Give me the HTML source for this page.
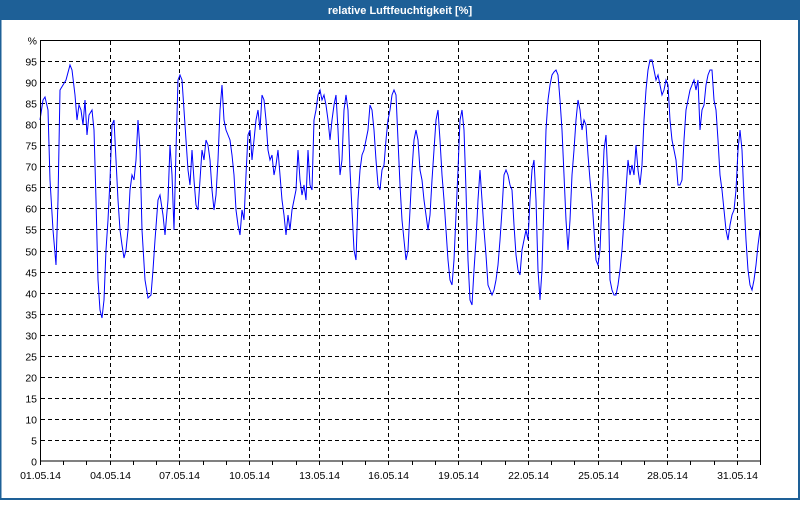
<!DOCTYPE html>
<html><head><meta charset="utf-8"><style>
html,body{margin:0;padding:0;background:#fff;}
body{width:800px;height:500px;overflow:hidden;}
svg text{font-family:"Liberation Sans",sans-serif;font-size:10.5px;fill:#000;}
</style></head><body>
<svg width="800" height="500" viewBox="0 0 800 500" xmlns="http://www.w3.org/2000/svg">
<rect x="0" y="0" width="800" height="500" fill="#fff"/>
<rect x="0" y="0" width="800" height="20" fill="#1e6097"/>
<rect x="0" y="20" width="1.5" height="480" fill="#1e6097"/>
<rect x="798" y="20" width="2" height="480" fill="#1e6097"/>
<rect x="0" y="498" width="800" height="2" fill="#1e6097"/>
<text x="400" y="14" text-anchor="middle" style="fill:#fff;font-weight:bold;font-size:11px">relative Luftfeuchtigkeit [%]</text>
<g stroke="#000" stroke-width="1" stroke-dasharray="4,3" fill="none" id="grid"></g>
<g id="labels"></g>
<polyline id="line" fill="none" stroke="#0000ff" stroke-width="1"/>
<rect x="40.5" y="40.5" width="720" height="420.5" fill="none" stroke="#000"/>
</svg>
<script>
var ns="http://www.w3.org/2000/svg",svg=document.querySelector('svg'),g=document.getElementById('grid'),lb=document.getElementById('labels');
function el(p,t,a,txt){var e=document.createElementNS(ns,t);for(var k in a)e.setAttribute(k,a[k]);if(txt)e.textContent=txt;p.appendChild(e);return e;}
var y0=461,sp=21.05,dx=23.23;
for(var i=0;i<=20;i++){var y=Math.round(y0-i*sp)+0.5;
 if(i>0&&i<20)el(g,'line',{x1:41,x2:760,y1:y,y2:y});
 el(lb,'text',{x:37,y:y+4,'text-anchor':'end'},i<20?String(i*5):'%');}
var d=['01.05.14','04.05.14','07.05.14','10.05.14','13.05.14','16.05.14','19.05.14','22.05.14','25.05.14','28.05.14','31.05.14'];
for(var j=0;j<=31;j++){var x=Math.round(40+j*dx)+0.5;
 el(svg,'line',{x1:x,x2:x,y1:461,y2:465,stroke:'#000'});
 if(j%3==0){if(j>0)el(g,'line',{x1:x,x2:x,y1:41,y2:461});
  el(lb,'text',{x:x,y:479,'text-anchor':'middle'},d[j/3]);}}
var p="40,120 43,100 45,97 48,110 50,180 53,230 56,265 58,200 60,90 63,85 66,80 70,65 72,70 75,95 77,120 79,105 81,110 83,125 85,100 87,135 89,115 92,110 94,130 96,200 98,280 100,310 102,318 104,300 106,250 108,220 110,180 112,125 114,120 116,160 118,200 120,230 122,245 124,258 126,250 128,230 130,190 132,175 134,180 136,160 138,120 140,150 142,230 145,280 148,298 151,295 153,270 155,240 158,200 160,195 163,215 165,235 168,200 170,145 172,175 174,230 176,150 178,80 180,75 182,80 184,110 186,140 188,170 190,185 192,150 194,180 196,205 198,210 200,180 202,150 204,160 206,140 208,145 210,160 212,190 214,210 216,195 218,160 220,110 222,85 224,120 226,130 228,135 230,140 232,155 234,175 236,210 238,225 240,235 242,210 244,220 246,175 248,135 250,130 252,160 254,140 256,120 258,110 260,130 262,95 264,100 266,120 268,150 270,160 272,155 274,175 276,165 278,150 280,175 282,200 284,215 286,235 288,215 290,230 292,210 294,200 296,190 298,150 300,180 302,195 304,185 306,200 308,150 310,185 312,190 314,120 316,110 318,95 320,90 322,100 324,95 326,105 328,120 330,140 332,120 334,105 336,95 338,130 340,175 342,160 344,110 346,95 348,110 350,170 352,210 354,250 356,260 358,200 360,170 362,155 364,150 366,140 368,130 370,105 372,110 374,130 376,160 378,185 380,190 382,170 384,165 386,140 388,120 390,110 392,95 394,90 396,95 398,140 400,185 402,220 404,240 406,260 408,250 410,210 412,170 414,140 416,130 418,140 420,170 422,180 424,200 426,215 428,230 430,215 432,180 434,150 436,120 438,110 440,140 442,175 444,200 446,230 448,260 450,280 452,285 454,260 456,215 458,170 460,120 462,110 464,130 466,190 468,260 470,300 472,305 474,270 476,240 478,200 480,170 482,200 484,230 486,255 488,285 490,290 492,295 494,290 496,280 498,265 500,240 502,210 504,175 506,170 508,175 510,185 512,190 514,225 516,255 518,270 520,275 522,250 524,240 526,230 528,240 530,200 532,170 534,160 536,200 538,270 540,300 542,270 544,200 546,130 548,100 550,85 552,75 554,72 556,70 558,75 560,100 562,130 564,175 566,220 568,250 570,220 572,175 574,150 576,120 578,100 580,110 582,130 584,120 586,125 588,155 590,180 592,200 594,230 596,260 598,265 600,250 602,200 604,150 606,135 608,180 610,280 612,290 614,295 616,295 618,285 620,270 622,250 624,220 626,190 628,160 630,175 632,165 634,175 636,145 638,170 640,185 642,165 644,120 646,90 648,70 650,60 652,60 654,70 656,80 658,75 660,85 662,95 664,90 666,80 668,85 670,120 672,140 674,150 676,160 678,185 680,185 682,180 684,140 686,110 688,100 690,90 692,85 694,80 696,90 698,80 700,130 702,110 704,105 706,85 708,75 710,70 712,70 714,100 716,110 718,140 720,175 722,190 724,210 726,230 728,240 730,225 732,215 734,210 736,190 738,150 740,130 742,150 744,200 746,240 748,270 750,285 752,290 754,280 756,265 758,245 760,230";
document.getElementById('line').setAttribute('points',p);
</script>
</body></html>
